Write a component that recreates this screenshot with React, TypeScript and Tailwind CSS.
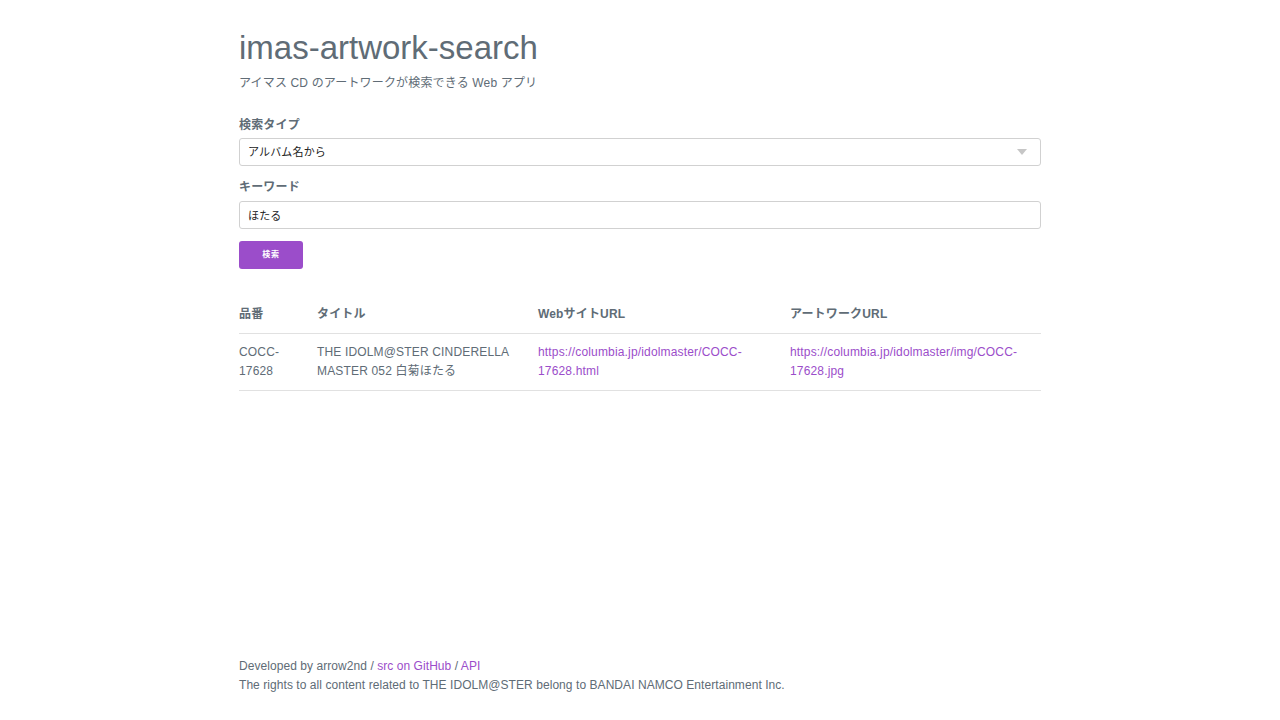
import React from "react"

const font = {
  fontFamily: '"Liberation Sans", Arial, "Noto Sans CJK JP", sans-serif',
}

export default function App() {
  return (
    <div className="min-h-[720px] bg-white text-[#606c76] tracking-[0.01em]" style={font}>
      <div className="mx-auto w-[802px] pt-[28px]">
        <h1 className="text-[33px] leading-[40px] tracking-normal">imas-artwork-search</h1>
        <p className="mt-[5.5px] text-[12px] leading-[19px]">
          アイマス CD のアートワークが検索できる Web アプリ
        </p>

        <form className="mt-[23px]" onSubmit={(e) => e.preventDefault()}>
          <label className="block text-[12px] font-bold leading-[19px]">検索タイプ</label>
          <div className="relative mt-[3.5px]">
            <select
              className="h-[28px] w-full appearance-none rounded-[3px] border border-[#d1d1d1] bg-white px-[8px] text-[11px] text-[#222] outline-none"
              style={font}
              defaultValue="album"
            >
              <option value="album">アルバム名から</option>
              <option value="song">曲名から</option>
            </select>
            <span className="pointer-events-none absolute right-[14px] top-[11px] h-0 w-0 border-x-[5px] border-t-[6px] border-x-transparent border-t-[#c6c6c6]" />
          </div>

          <label className="mt-[11.5px] block text-[12px] font-bold leading-[19px]">キーワード</label>
          <input
            className="mt-[4.5px] block h-[28px] w-full rounded-[3px] border border-[#d1d1d1] bg-white px-[8px] text-[11px] text-[#222] outline-none"
            style={font}
            defaultValue="ほたる"
          />

          <button
            type="submit"
            className="mt-[12px] block h-[28px] w-[64px] rounded-[3px] bg-[#9b4dca] text-[8px] font-bold tracking-[0.75px] text-white"
            style={font}
          >
            検索
          </button>
        </form>

        <table className="mt-[27px] w-full border-collapse text-left text-[12px] leading-[19px]">
          <colgroup>
            <col className="w-[67px]" />
            <col className="w-[221px]" />
            <col className="w-[252px]" />
            <col />
          </colgroup>
          <thead>
            <tr className="border-b border-[#e1e1e1]">
              <th className="py-[9px] pr-[11px] font-bold">品番</th>
              <th className="px-[11px] py-[9px] font-bold">タイトル</th>
              <th className="px-[11px] py-[9px] font-bold">WebサイトURL</th>
              <th className="py-[9px] pl-[11px] font-bold">アートワークURL</th>
            </tr>
          </thead>
          <tbody>
            <tr className="border-b border-[#e1e1e1] align-top">
              <td className="py-[9px] pr-[11px]">COCC-<br />17628</td>
              <td className="px-[11px] py-[9px]">THE IDOLM@STER CINDERELLA MASTER 052 白菊ほたる</td>
              <td className="px-[11px] py-[9px]">
                <a href="#" className="text-[#9b4dca]">https://columbia.jp/idolmaster/COCC-<br />17628.html</a>
              </td>
              <td className="py-[9px] pl-[11px]">
                <a href="#" className="text-[#9b4dca]">https://columbia.jp/idolmaster/img/COCC-<br />17628.jpg</a>
              </td>
            </tr>
          </tbody>
        </table>

        <footer className="mt-[266px] text-[12px] leading-[19px] tracking-[0.005em]">
          <p>
            Developed by arrow2nd / <a href="#" className="text-[#9b4dca]">src on GitHub</a> /{" "}
            <a href="#" className="text-[#9b4dca]">API</a>
          </p>
          <p>The rights to all content related to THE IDOLM@STER belong to BANDAI NAMCO Entertainment Inc.</p>
        </footer>
      </div>
    </div>
  )
}
